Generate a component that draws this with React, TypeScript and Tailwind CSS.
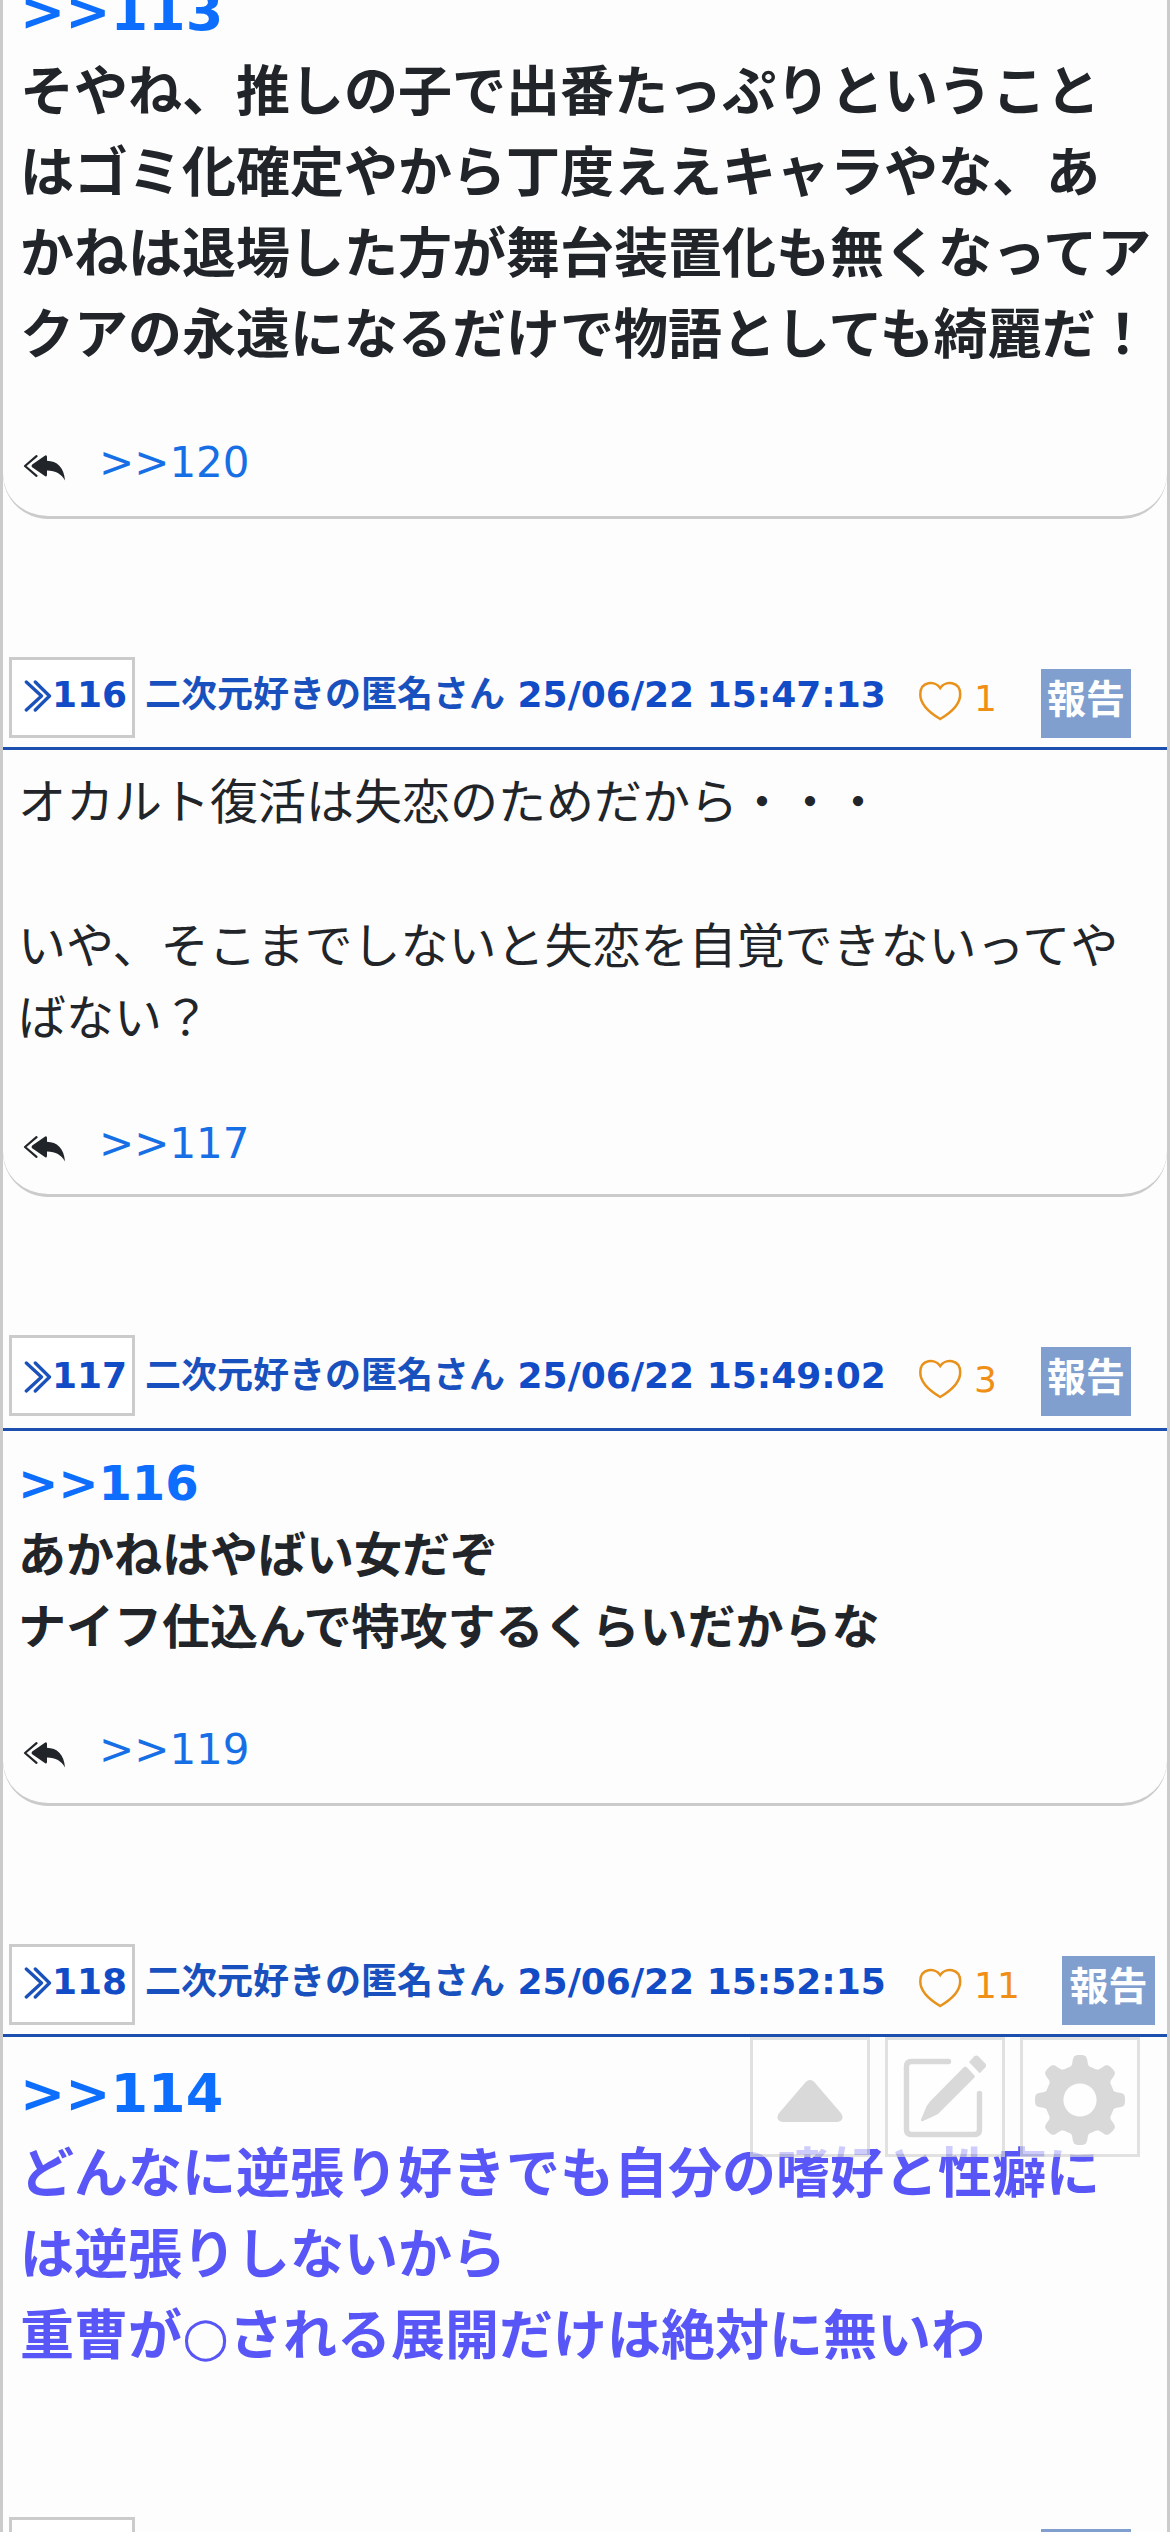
import React from "react";

type Post = {
  id: string;
  time: string;
  likes: string;
  headerHeight: string;
  textOffset: string;
  reportBox: string;
  bodySize: string;
  cardHeight: string;
  ref?: string;
  lines: string[];
  reply?: string;
  replyGap: string;
  color?: string;
  bordered: boolean;
};

const posts: Post[] = [
  {
    id: "116",
    time: "25/06/22 15:47:13",
    likes: "1",
    headerHeight: "h-[93px]",
    textOffset: "pt-0",
    reportBox: "ml-[1038px] w-[90px]",
    bodySize: "text-[48px] leading-[72px]",
    cardHeight: "h-[447px]",
    lines: ["オカルト復活は失恋のためだから・・・", "", "いや、そこまでしないと失恋を自覚できないってや", "ばない？"],
    reply: ">>117",
    replyGap: "mt-[58px]",
    bordered: true,
  },
  {
    id: "117",
    time: "25/06/22 15:49:02",
    likes: "3",
    headerHeight: "h-[96px]",
    textOffset: "pt-[3px]",
    reportBox: "ml-[1038px] w-[90px]",
    bodySize: "text-[48px] leading-[72px] font-bold",
    cardHeight: "h-[375px]",
    ref: ">>116",
    lines: ["あかねはやばい女だぞ", "ナイフ仕込んで特攻するくらいだからな"],
    reply: ">>119",
    replyGap: "mt-[55px]",
    bordered: true,
  },
  {
    id: "118",
    time: "25/06/22 15:52:15",
    likes: "11",
    headerHeight: "h-[93px]",
    textOffset: "pt-0",
    reportBox: "ml-[1059px] w-[93px]",
    bodySize: "pl-[2px] text-[54px] leading-[81px] font-bold",
    cardHeight: "h-[342px]",
    ref: ">>114",
    lines: ["どんなに逆張り好きでも自分の嗜好と性癖に", "は逆張りしないから", "重曹が○される展開だけは絶対に無いわ"],
    replyGap: "",
    color: "text-[#5856f6]",
    bordered: false,
  },
];

function ReplyIcon() {
  return (
    <svg className="h-[26px] w-[43px] shrink-0" viewBox="0 0 43 26">
      <path d="M13.5 1.2 L2 11 L13.5 20.8" fill="none" stroke="#212529" strokeWidth="2.2" strokeLinecap="round" strokeLinejoin="round" />
      <path
        d="M22.2 .4 Q24 -.2 24 1.8 V5.7 C34 6 41 12 42 25.5 C38 19 33 15.6 24 15.6 V19.8 Q24 22 22.2 21.2 L9.2 12.2 Q8 11 9.2 9.6 Z"
        fill="#212529"
      />
    </svg>
  );
}

function HeartIcon() {
  return (
    <svg className="h-[40px] w-[43px] shrink-0" viewBox="0 0 43 40">
      <path
        d="M21.2 7 C16 -.5 1.3 -.2 1.3 13.5 C1.3 23 11 32 21.2 38 C31.4 32 41.2 23 41.2 13.5 C41.2 -.2 26.4 -.5 21.2 7 Z"
        fill="none"
        stroke="#e8921c"
        strokeWidth="2.5"
        strokeLinejoin="miter"
      />
    </svg>
  );
}

function DoubleChevron() {
  return (
    <svg className="h-[32px] w-[28px] shrink-0" viewBox="0 0 28 32">
      <path
        d="M2.3 2 L17.5 16 L2.3 30 M11.3 2 L25.5 16 L11.3 30"
        fill="none"
        stroke="#1a51bb"
        strokeWidth="3.3"
        strokeLinecap="round"
        strokeLinejoin="round"
      />
    </svg>
  );
}

function ReplyRow({ label, gap }: { label: string; gap: string }) {
  return (
    <div className={`${gap} flex h-[63px] items-start pl-[5px]`}>
      <div className="mt-[24px] flex">
        <ReplyIcon />
      </div>
      <span className="ml-[33px] text-[42px] leading-[63px] text-[#176fe6]">{label}</span>
    </div>
  );
}

function PostHeader({ post }: { post: Post }) {
  return (
    <div className={`relative mt-[138px] flex ${post.headerHeight} border-b-[3px] border-[#1c4fae] pl-[6px]`}>
      <div className="flex h-[81px] w-[126px] shrink-0 border-[3px] border-[#cbcbcb] bg-white pl-[12px]">
        <div className={`flex ${post.textOffset}`}>
          <div className="mt-[20px] flex">
            <DoubleChevron />
          </div>
          <span className="mt-[8px] text-[36px] leading-[54px] font-bold text-[#124bc6]">{post.id}</span>
        </div>
      </div>
      <div className={`ml-[10px] whitespace-nowrap ${post.textOffset}`}>
        <span className="mt-[11px] block text-[36px] leading-[54px] font-bold text-[#1850bd]">
          二次元好きの匿名さん <span className="text-[#124bc6]">{post.time}</span>
        </span>
      </div>
      <div className="absolute inset-0 flex">
        <div className={`${post.reportBox} mt-[12px] h-[69px] bg-[#809fce] text-center text-[39px] leading-[62px] font-bold whitespace-nowrap text-white`}>
          報告
        </div>
      </div>
      <div className="absolute top-[24px] left-[916px] flex">
        <HeartIcon />
        <span className={`-mt-[9px] ml-[12px] text-[36px] leading-[54px] text-[#ef8f16] ${post.textOffset}`}>{post.likes}</span>
      </div>
    </div>
  );
}

function PostBody({ post }: { post: Post }) {
  return (
    <div className={`${post.cardHeight} ${post.bordered ? "rounded-b-[45px] border-b-[3px] border-[#cbcbcb]" : ""} px-[15px] pt-[16px]`}>
      <div className={`${post.bodySize} ${post.color ?? "text-[#212529]"} whitespace-nowrap`}>
        {post.ref && <div className="text-[#0d6efd]">{post.ref}</div>}
        {post.lines.map((line, i) => (
          <div key={i}>{line || "\u00a0"}</div>
        ))}
      </div>
      {post.reply && <ReplyRow label={post.reply} gap={post.replyGap} />}
    </div>
  );
}

// Eight rounded teeth; tanh steepens the flanks between tooth tip and valley.
function gearPath() {
  const points: string[] = [];
  for (let i = 0; i < 360; i++) {
    const a = (i / 360) * Math.PI * 2;
    const r = 39.8 + 5.3 * Math.tanh(2.5 * (Math.cos(8 * a) - 0.08));
    points.push(`${(45 + r * Math.sin(a)).toFixed(2)} ${(45 - r * Math.cos(a)).toFixed(2)}`);
  }
  return `M${points.join("L")}Z M61.6 45 A16.6 16.6 0 1 0 28.4 45 A16.6 16.6 0 1 0 61.6 45 Z`;
}

function FloatingTools() {
  return (
    <div className="absolute top-[2037px] left-[750px] flex gap-[15px] opacity-70">
      <button className="flex size-[120px] items-center justify-center border-[3px] border-[#d6d6d6] bg-white">
        <svg className="mt-[8px] h-[42px] w-[66px]" viewBox="0 0 66 42">
          <path d="M28.5 2.2 Q33 -2 37.5 2.2 L64.3 33.5 Q68 41 60 42 H6 Q-2 41 1.7 33.5 Z" fill="#cacaca" />
        </svg>
      </button>
      <button className="flex size-[120px] items-center justify-center border-[3px] border-[#d6d6d6] bg-white">
        <svg className="h-[84px] w-[84px]" viewBox="0 0 84 84">
          <path
            d="M45.5 6.5 H8.5 Q3.5 6.5 3.5 11.5 V74.5 Q3.5 79.5 8.5 79.5 H71.5 Q76.5 79.5 76.5 74.5 V38.5"
            fill="none"
            stroke="#cacaca"
            strokeWidth="5.4"
            strokeLinecap="round"
          />
          <path d="M61 12 Q62.3 11 63.5 12 L71.5 20.5 Q72.3 21.5 71.5 22.5 L38 56 Q35.5 59.5 31 61 L20 66 Q17.5 67 18 64.5 L22 55 Q23.5 50.5 27 46.5 Z" fill="#cacaca" />
          <path d="M66 7 L71.5 1.3 Q73.5 -.3 75.5 1.5 L82.3 8.5 Q83.8 10.5 82.3 12.5 L76.7 18.2 Z" fill="#cacaca" />
        </svg>
      </button>
      <button className="flex size-[120px] items-center justify-center border-[3px] border-[#d6d6d6] bg-white">
        <svg className="mt-[6px] h-[90px] w-[90px]" viewBox="0 0 90 90">
          <path d={gearPath()} fill="#cacaca" fillRule="evenodd" />
        </svg>
      </button>
    </div>
  );
}

export default function App() {
  return (
    <div
      lang="ja"
      className="relative h-[2532px] w-[1170px] overflow-hidden bg-[#fdfdfd] font-['DejaVu_Sans','Noto_Sans_CJK_JP',sans-serif] text-[#212529]"
    >
      <div className="h-full overflow-hidden border-x-[3px] border-[#cbcbcb]">
        <div className="flow-root h-[519px] rounded-b-[45px] border-b-[3px] border-[#cbcbcb] px-[15px]">
          <div className="-mt-[29px] pl-[2px] text-[54px] leading-[81px] font-bold whitespace-nowrap">
            <div className="text-[#0d6efd]">&gt;&gt;113</div>
            <div>そやね、推しの子で出番たっぷりということ</div>
            <div>はゴミ化確定やから丁度ええキャラやな、あ</div>
            <div>かねは退場した方が舞台装置化も無くなってア</div>
            <div>クアの永遠になるだけで物語としても綺麗だ！</div>
          </div>
          <ReplyRow label=">>120" gap="mt-[55px]" />
        </div>
        {posts.map((post) => (
          <React.Fragment key={post.id}>
            <PostHeader post={post} />
            <PostBody post={post} />
          </React.Fragment>
        ))}
        <div className="mt-[138px] flex pl-[6px]">
          <div className="h-[81px] w-[126px] border-[3px] border-[#cbcbcb] bg-white" />
          <div className="mt-[12px] ml-[906px] h-[69px] w-[90px] bg-[#809fce]" />
        </div>
      </div>
      <FloatingTools />
    </div>
  );
}
